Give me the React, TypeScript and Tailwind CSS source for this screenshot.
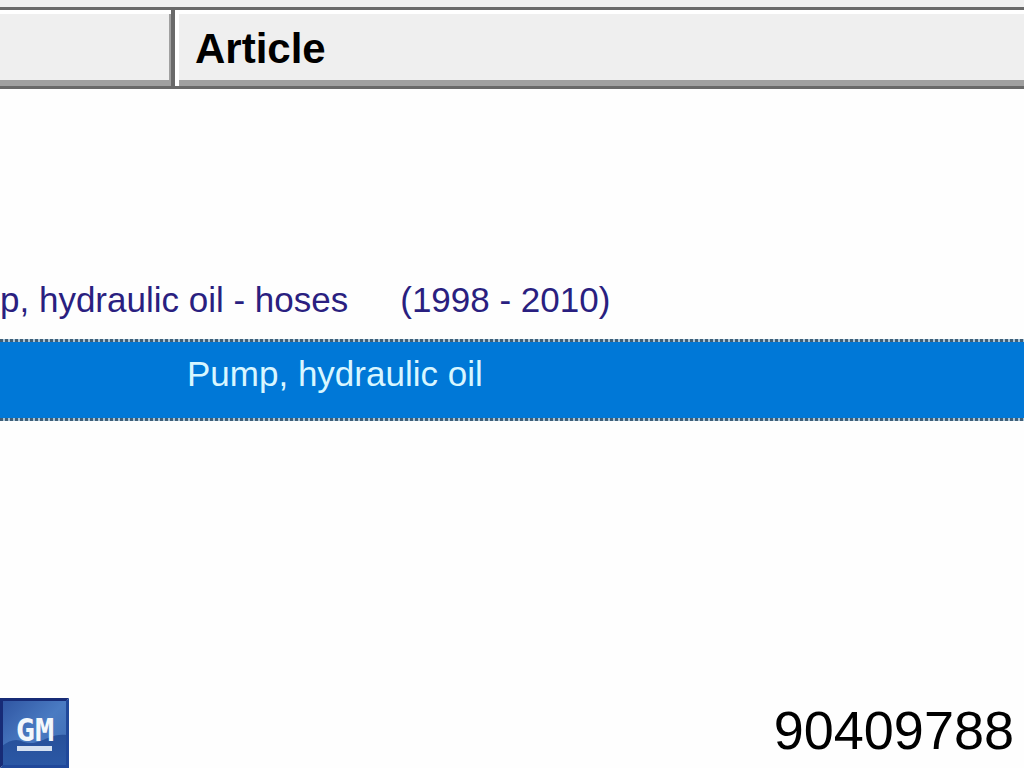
const DottedLine = () => (
    <div className="h-[3px] bg-[repeating-linear-gradient(90deg,#3f5f78_0px,#3f5f78_3px,#a9c4d6_3px,#a9c4d6_5px)]" />
);

const GmLogo = () => (
    <svg width="69" height="70" viewBox="0 0 69 70" role="img" aria-label="GM logo" className="block">
        <defs>
            <linearGradient id="gm-sky" x1="0" y1="0" x2="1" y2="1">
                <stop offset="0" stopColor="#2f55a2" />
                <stop offset="0.5" stopColor="#4a7bc2" />
                <stop offset="1" stopColor="#3c69b2" />
            </linearGradient>
            <linearGradient id="gm-base" x1="0" y1="0" x2="0" y2="1">
                <stop offset="0" stopColor="#27509a" />
                <stop offset="1" stopColor="#2b58a5" />
            </linearGradient>
        </defs>
        <rect x="2" y="2" width="65" height="66" fill="url(#gm-sky)" />
        <path d="M2 48 C10 42 16 40 24 44 C34 47 40 43 48 40 C55 37 60 36 67 37 V68 H2 Z" fill="url(#gm-base)" />
        <path d="M0 0 H69 L66 3 H3 V67 L0 70 Z" fill="#172b76" />
        <path d="M69 0 V70 H0 L3 67 H66 V3 Z" fill="#20489a" />
        <text
            x="35"
            y="43"
            textAnchor="middle"
            fill="#f3f7fb"
            className="font-['DejaVu_Sans_Mono',monospace] text-[32px] font-bold"
        >
            GM
        </text>
        <rect x="17" y="48" width="35" height="5" fill="#d5e1f1" />
    </svg>
);

const App = () => {
    return (
        <div className="flex min-h-screen flex-col overflow-hidden bg-[#fefefe] font-['Liberation_Sans',Arial,sans-serif]">
            <div className="h-[7px] bg-[#efefef]" />
            <table className="w-full table-fixed border-separate border-spacing-0 text-left">
                <colgroup>
                    <col className="w-[175px]" />
                    <col />
                </colgroup>
                <thead>
                    <tr className="bg-[#efefef]">
                        <td className="border-y-[3px] border-[#696969] p-0">
                            <div className="flex h-[76px]">
                                <div className="flex-1 border-t-4 border-b-[6px] border-t-white border-b-[#a0a0a0]">
                                    <div className="ml-auto h-full w-[2px] bg-[#a0a0a0]" />
                                </div>
                                <div className="w-1 bg-[#696969]" />
                            </div>
                        </td>
                        <th scope="col" className="border-y-[3px] border-[#696969] p-0">
                            <div className="flex h-[76px]">
                                <div className="w-1 bg-white" />
                                <div className="flex flex-1 items-center border-t-4 border-b-[6px] border-t-white border-b-[#a0a0a0] px-4 pt-1 text-[42px] leading-none font-bold text-black">
                                    Article
                                </div>
                            </div>
                        </th>
                    </tr>
                </thead>
                <tbody>
                    <tr>
                        <td colSpan={2} className="h-[250px] p-0 align-bottom">
                            <div className="flex gap-[52px] pb-3 text-[35px] leading-[54px] whitespace-nowrap text-[#2a1f80]">
                                <span>p, hydraulic oil - hoses</span>
                                <span>(1998 - 2010)</span>
                            </div>
                        </td>
                    </tr>
                    <tr className="bg-[#0078d7]">
                        <td colSpan={2} className="p-0">
                            <DottedLine />
                            <div className="h-[76px] pt-1 pl-[187px] text-[35px] leading-[56px] whitespace-nowrap text-[#d8f6ff]">
                                Pump, hydraulic oil
                            </div>
                            <DottedLine />
                        </td>
                    </tr>
                </tbody>
            </table>
            <div className="mt-auto flex items-end justify-between">
                <GmLogo />
                <p className="pr-[10px] text-[54px] leading-[76px] text-black">90409788</p>
            </div>
        </div>
    );
};

export default App;
